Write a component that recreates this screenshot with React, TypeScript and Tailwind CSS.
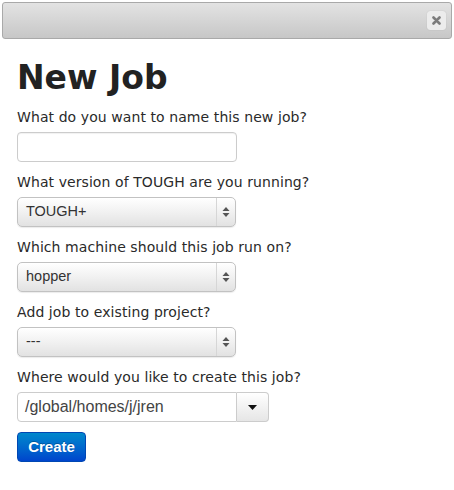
import React from "react";

const sans = "font-['Liberation_Sans',Arial,sans-serif]";
const dejavu = "font-['DejaVu_Sans',Verdana,sans-serif]";

const Arrows = () => (
  <svg width="8" height="12" viewBox="0 0 8 12" className="block">
    <path d="M4 1 L7.5 5 L0.5 5 Z" fill="#555" />
    <path d="M4 11 L7.5 7 L0.5 7 Z" fill="#555" />
  </svg>
);

const FakeSelect = ({ value }: { value: string }) => (
  <div className="flex h-[30px] w-[219px] items-center rounded-[5px] border border-[#c2c2c2] bg-gradient-to-b from-[#ffffff] via-[#f1f1f1] to-[#e2e2e2] shadow-[inset_0_1px_0_#fff,0_1px_1px_rgba(0,0,0,0.08)]">
    <span className={`${sans} flex-1 pl-[8px] text-[14.5px] text-[#333]`}>{value}</span>
    <div className="mr-[1px] flex h-full w-[18px] items-center justify-center border-l border-[#d6d6d6]">
      <Arrows />
    </div>
  </div>
);

const Field = ({ label, children }: { label: string; children: React.ReactNode }) => (
  <div className="mb-[10px]">
    <div className={`${dejavu} mb-[5px] h-[20px] text-[14px] leading-[20px] tracking-[0.08px] text-[#2a2a2a]`}>{label}</div>
    {children}
  </div>
);

export default function App() {
  return (
    <div className="h-[490px] w-[454px] bg-white pt-[2px]">
      {/* title bar */}
      <div className="mx-[2px] flex h-[37px] items-center justify-end rounded-[3px] border border-[#a9a9a9] bg-gradient-to-b from-[#e3e3e3] to-[#c7c7c7] pr-[5px]">
        <div className="flex h-[19px] w-[19px] items-center justify-center rounded-[3px] bg-[#ececec] shadow-[0_0_1px_rgba(0,0,0,0.2)]">
          <svg width="9" height="9" viewBox="0 0 9 9">
            <path d="M1.5 1.5 L7.5 7.5 M7.5 1.5 L1.5 7.5" stroke="#7c7c7c" strokeWidth="2.6" strokeLinecap="round" />
          </svg>
        </div>
      </div>

      <div className="px-[17px] pt-[19px]">
        <h1 className={`${dejavu} mb-[9px] h-[40px] text-[33px] font-bold leading-[40px] text-[#222]`}>New Job</h1>

        <Field label="What do you want to name this new job?">
          <div className="h-[30px] w-[220px] rounded-[4px] border border-[#cccccc] bg-white shadow-[inset_0_1px_1px_rgba(0,0,0,0.06)]" />
        </Field>

        <Field label="What version of TOUGH are you running?">
          <FakeSelect value="TOUGH+" />
        </Field>

        <Field label="Which machine should this job run on?">
          <FakeSelect value="hopper" />
        </Field>

        <Field label="Add job to existing project?">
          <FakeSelect value="---" />
        </Field>

        <Field label="Where would you like to create this job?">
          <div className="flex h-[30px] w-[252px]">
            <div className={`${sans} flex w-[220px] items-center rounded-l-[4px] border border-[#cccccc] bg-white pl-[7px] text-[16px] text-[#444]`}>
              /global/homes/j/jren
            </div>
            <div className="flex w-[32px] items-center justify-center rounded-r-[4px] border border-l-0 border-[#cccccc] bg-gradient-to-b from-[#ffffff] to-[#e6e6e6]">
              <svg width="9" height="5" viewBox="0 0 9 5">
                <path d="M0 0 L9 0 L4.5 5 Z" fill="#111" />
              </svg>
            </div>
          </div>
        </Field>

        <button
          className={`${sans} h-[30px] w-[69px] rounded-[4px] border border-[#0047b3] bg-gradient-to-b from-[#0088cc] to-[#0044cc] text-[15px] font-bold text-white [text-shadow:0_-1px_0_rgba(0,0,0,0.25)]`}
        >
          Create
        </button>
      </div>
    </div>
  );
}
